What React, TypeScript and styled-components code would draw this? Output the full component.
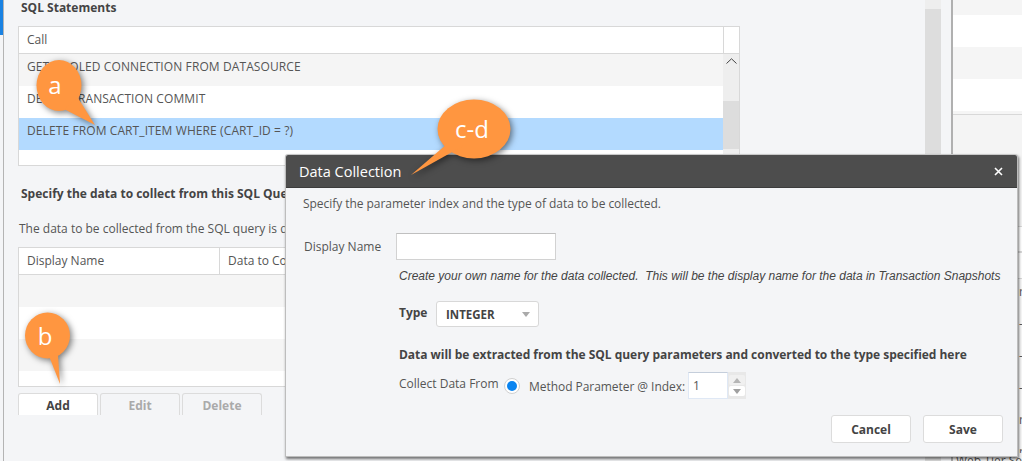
import React from "react";
import styled, { createGlobalStyle } from "styled-components";

const Global = createGlobalStyle`
  html, body { margin: 0; padding: 0; background: #f4f4f4; }
  * { box-sizing: border-box; }
`;

const FONT = `"Open Sans", "Noto Sans", sans-serif`;

const Page = styled.div`
  position: relative;
  width: 1022px;
  height: 461px;
  overflow: hidden;
  display: flex;
  font-family: ${FONT};
  font-size: 12px;
  color: #555;
  background: #f4f4f4;
`;

const Sliver = styled.div`
  width: 3px;
  flex: none;
  background: linear-gradient(#1a82e2 0 35px, #f4f5f7 35px);
`;

const Panel = styled.div`
  position: relative;
  width: 950px;
  flex: none;
  display: flex;
  background: #f4f5f7;
  border-left: 1px solid #b4b4b4;
  border-right: 2px solid #b0b0b0;
`;

const PanelBody = styled.div`
  width: 921px;
  flex: none;
  padding: 0 0 0 14px;
  display: flex;
  flex-direction: column;
`;

const OuterScroll = styled.div`
  width: 16px;
  flex: none;
  background: linear-gradient(#eeeeee 0 9px, #dddddd 9px);
`;

const SectionTitle = styled.div<{ $top?: number }>`
  font-weight: 700;
  font-size: 12px;
  line-height: 16px;
  color: #444;
  padding-left: 3px;
  margin-top: ${(p) => p.$top ?? 0}px;
`;

const Plain = styled.div`
  font-size: 12px;
  line-height: 16px;
  color: #555;
  padding-left: 1px;
  margin-top: 19px;
  white-space: nowrap;
`;

const Table = styled.div<{ $h: number; $top: number }>`
  width: 722px;
  height: ${(p) => p.$h}px;
  margin-top: ${(p) => p.$top}px;
  border: 1px solid #d8d8d8;
  background: #fff;
  flex: none;
  overflow: hidden;
`;

const HeadRow = styled.div`
  height: 27px;
  display: flex;
  border-bottom: 1px solid #d8d8d8;
  background: #fff;
`;

const HeadCell = styled.div<{ $w?: number; $grow?: boolean }>`
  width: ${(p) => (p.$w ? `${p.$w}px` : "auto")};
  flex: ${(p) => (p.$grow ? 1 : "none")};
  padding: 0 8px;
  line-height: 25px;
  border-right: 1px solid #d8d8d8;
  white-space: nowrap;
`;

const TableMain = styled.div`
  display: flex;
`;

const Rows = styled.div`
  width: 704px;
  flex: none;
`;

const Row = styled.div<{ $v: "odd" | "even" | "sel"; $h?: number }>`
  height: ${(p) => p.$h ?? 32}px;
  line-height: 25px;
  padding-left: 8px;
  color: #555;
  letter-spacing: 0.1px;
  white-space: nowrap;
  background: ${(p) =>
    p.$v === "odd" ? "#f5f5f5" : p.$v === "sel" ? "#b3daff" : "#fff"};
`;

const InnerScroll = styled.div`
  width: 16px;
  flex: none;
  position: relative;
  height: 112px;
  background: linear-gradient(#eeeeee 0 47px, #dddddd 47px 95px, #eeeeee 95px);
  display: flex;
  justify-content: center;
  padding-top: 4px;
`;

const ButtonRow = styled.div`
  display: flex;
  gap: 2px;
  margin-top: 6px;
`;

const TabButton = styled.div<{ $off?: boolean }>`
  width: 80px;
  height: 22px;
  border: 1px solid #dcdcdc;
  border-bottom: none;
  border-radius: 3px 3px 0 0;
  background: ${(p) => (p.$off ? "#f4f5f7" : "#fff")};
  color: ${(p) => (p.$off ? "#aaa" : "#444")};
  font-weight: 700;
  text-align: center;
  line-height: 23px;
`;

const RightSide = styled.div`
  flex: 1;
  min-width: 0;
  display: flex;
  flex-direction: column;
  background: #f4f4f4;
`;

const SideRow = styled.div<{ $v: "odd" | "even"; $h?: number }>`
  height: ${(p) => p.$h ?? 32}px;
  flex: none;
  background: ${(p) => (p.$v === "odd" ? "#f5f5f5" : "#fff")};
`;

const SideDivider = styled.div<{ $top?: number; $h?: number }>`
  height: ${(p) => p.$h ?? 1}px;
  flex: none;
  margin-top: ${(p) => p.$top ?? 0}px;
  background: #d8d8d8;
`;

const SideCell = styled.div<{ $h?: number }>`
  height: ${(p) => p.$h ?? 32}px;
  flex: none;
  padding-left: 66px;
  line-height: 26px;
  color: #555;
  font-size: 12px;
  background: #f8f8f8;
  white-space: nowrap;
  overflow: hidden;
`;

const BottomText = styled.div`
  height: 16px;
  flex: none;
  margin-left: -1px;
  padding-left: 3px;
  border-left: 1px solid #888;
  font-size: 12px;
  line-height: 16px;
  white-space: nowrap;
  overflow: hidden;
  color: #555;
`;

const Dialog = styled.div`
  position: absolute;
  left: 285px;
  top: 154px;
  width: 733px;
  height: 303px;
  background: #f4f5f7;
  border: 1px solid #bdbdbd;
  border-top-color: #c8c8c8;
  border-radius: 3px 3px 0 0;
  box-shadow: 1px 2px 3px rgba(0, 0, 0, 0.55);
  display: flex;
  flex-direction: column;
`;

const TitleBar = styled.div`
  height: 33px;
  flex: none;
  background: #4d4d4d;
  border-bottom: 1px solid #3c3c3c;
  border-radius: 2px 2px 0 0;
  color: #fff;
  font-size: 14.5px;
  display: flex;
  align-items: center;
  justify-content: space-between;
  padding: 0 13px;
`;

const CloseIcon = styled.svg`
  width: 9px;
  height: 9px;
  display: block;
  margin-right: 1px;
`;

const DialogBody = styled.div`
  flex: 1;
  display: flex;
  flex-direction: column;
  padding: 8px 14px 0 17px;
`;

const Intro = styled.div`
  line-height: 16px;
  color: #555;
  letter-spacing: -0.05px;
`;

const NameRow = styled.div`
  display: flex;
  align-items: center;
  margin-top: 21px;
  height: 27px;
`;

const FieldLabel = styled.div`
  width: 93px;
  flex: none;
  padding-left: 1px;
  color: #555;
`;

const TextBox = styled.div`
  width: 160px;
  height: 27px;
  background: #fff;
  border: 1px solid #d2d2d2;
  border-top-color: #c0c0c0;
`;

const Note = styled.div`
  margin: 8px 0 0 96px;
  font-family: "Liberation Sans", Arial, sans-serif;
  font-style: italic;
  font-size: 12px;
  line-height: 16px;
  color: #444;
  white-space: nowrap;
`;

const TypeRow = styled.div`
  display: flex;
  align-items: center;
  margin: 17px 0 0 96px;
  height: 26px;
`;

const TypeLabel = styled.div`
  font-weight: 700;
  color: #444;
  width: 37px;
  flex: none;
  margin-top: -3px;
`;

const SelectBox = styled.div`
  width: 103px;
  height: 26px;
  background: #fff;
  border: 1px solid #d8d8d8;
  border-radius: 3px;
  display: flex;
  align-items: center;
  justify-content: space-between;
  padding: 1px 8px 0 9px;
  font-weight: 700;
  font-size: 11.5px;
  color: #444;
`;

const Caret = styled.div`
  width: 0;
  height: 0;
  border-left: 4.5px solid transparent;
  border-right: 4.5px solid transparent;
  border-top: 5px solid #aaa;
`;

const BoldLine = styled.div`
  margin: 20px 0 0 96px;
  font-weight: 700;
  color: #444;
  line-height: 16px;
  letter-spacing: -0.03px;
  white-space: nowrap;
`;

const CollectRow = styled.div`
  display: flex;
  align-items: center;
  margin: 9px 0 0 96px;
  height: 27px;
  color: #555;
  white-space: nowrap;
`;

const CollectLabel = styled.div`
  width: 105px;
  flex: none;
  margin-top: -4px;
`;

const Radio = styled.div`
  width: 16px;
  height: 16px;
  flex: none;
  border-radius: 50%;
  background: #fff;
  border: 1px solid #d0d0d0;
  display: flex;
  align-items: center;
  justify-content: center;
  margin-right: 9px;
  &::after {
    content: "";
    width: 10px;
    height: 10px;
    border-radius: 50%;
    background: #0a84f0;
  }
`;

const MethodLabel = styled.div`
  width: 159px;
  flex: none;
  padding-top: 1px;
  letter-spacing: -0.05px;
`;

const NumberBox = styled.div`
  width: 40px;
  height: 27px;
  flex: none;
  background: #fff;
  border: 1px solid #dfe8f5;
  border-top-color: #c5cedb;
  padding-left: 4px;
  line-height: 26px;
  color: #555;
`;

const Spinner = styled.div`
  width: 18px;
  height: 27px;
  flex: none;
  background: #e8e8e8;
  padding: 3px 1px;
  display: flex;
  flex-direction: column;
  gap: 1px;
`;

const SpinBtn = styled.div<{ $up?: boolean }>`
  flex: 1;
  background: ${(p) => (p.$up ? "#f0f0f0" : "#fff")};
  border-radius: 2px;
  display: flex;
  align-items: center;
  justify-content: center;
  &::after {
    content: "";
    width: 0;
    height: 0;
    border-left: 4px solid transparent;
    border-right: 4px solid transparent;
    ${(p) =>
      p.$up
        ? "border-bottom: 5px solid #b5b5b5;"
        : "border-top: 5px solid #a0a0a0;"}
  }
`;

const Footer = styled.div`
  display: flex;
  justify-content: flex-end;
  gap: 12px;
  margin-top: 16px;
`;

const FootButton = styled.div`
  width: 80px;
  height: 28px;
  background: #fff;
  border: 1px solid #dcdcdc;
  border-radius: 3px;
  text-align: center;
  line-height: 27px;
  font-weight: 700;
  color: #444;
`;

const Callout = styled.div<{ $x: number; $y: number; $w: number; $h: number }>`
  position: absolute;
  left: ${(p) => p.$x}px;
  top: ${(p) => p.$y}px;
  width: ${(p) => p.$w}px;
  height: ${(p) => p.$h}px;
  pointer-events: none;
`;

const CalloutArt = styled.svg`
  position: absolute;
  inset: 0;
  width: 100%;
  height: 100%;
  overflow: visible;
  filter: drop-shadow(2px 2px 3px rgba(0, 0, 0, 0.5));
`;

const CalloutText = styled.span<{ $cx: number; $cy: number }>`
  position: absolute;
  left: ${(p) => p.$cx}px;
  top: ${(p) => p.$cy}px;
  transform: translate(-50%, -50%);
  color: #fff;
  font-size: 24px;
  line-height: 1;
  white-space: nowrap;
`;

const ORANGE = "#ff9640";

export default function App() {
  return (
    <>
      <Global />
      <Page>
        <Sliver />
        <Panel>
          <PanelBody>
            <SectionTitle>SQL Statements</SectionTitle>
            <Table $h={140} $top={10}>
              <HeadRow>
                <HeadCell $w={705}>Call</HeadCell>
              </HeadRow>
              <TableMain>
                <Rows>
                  <Row $v="odd">GET POOLED CONNECTION FROM DATASOURCE</Row>
                  <Row $v="even">DEBUG TRANSACTION COMMIT</Row>
                  <Row $v="sel">DELETE FROM CART_ITEM WHERE (CART_ID = ?)</Row>
                  <Row $v="even" $h={16} />
                </Rows>
                <InnerScroll>
                  <svg width="11" height="6" viewBox="0 0 11 6">
                    <path d="M0.5 5.5 L5.5 0.8 L10.5 5.5" fill="none" stroke="#444" strokeWidth="1" />
                  </svg>
                </InnerScroll>
              </TableMain>
            </Table>
            <SectionTitle $top={20}>
              Specify the data to collect from this SQL Query
            </SectionTitle>
            <Plain>The data to be collected from the SQL query is defined here</Plain>
            <Table $h={140} $top={10}>
              <HeadRow>
                <HeadCell $w={201}>Display Name</HeadCell>
                <HeadCell $grow>Data to Collect</HeadCell>
              </HeadRow>
              <Row $v="odd" />
              <Row $v="even" />
              <Row $v="odd" />
              <Row $v="even" $h={16} />
            </Table>
            <ButtonRow>
              <TabButton>Add</TabButton>
              <TabButton $off>Edit</TabButton>
              <TabButton $off>Delete</TabButton>
            </ButtonRow>
          </PanelBody>
          <OuterScroll />
        </Panel>
        <RightSide>
          <SideRow $v="odd" $h={15} />
          <SideRow $v="even" />
          <SideRow $v="odd" />
          <SideRow $v="even" />
          <SideRow $v="odd" $h={3} />
          <SideDivider />
          <SideDivider $top={111} />
          <SideRow $v="even" $h={24} />
          <SideDivider $h={2} />
          <SideRow $v="even" $h={25} />
          <SideDivider />
          <SideCell>r</SideCell>
          <SideCell>-</SideCell>
          <SideCell>-</SideCell>
          <SideCell>-</SideCell>
          <SideCell>r</SideCell>
          <SideCell $h={14}>r</SideCell>
          <BottomText>Web Tier Server</BottomText>
        </RightSide>

        <Dialog>
          <TitleBar>
            Data Collection
            <CloseIcon viewBox="0 0 9 9">
              <path d="M1 1 L8 8 M8 1 L1 8" stroke="#fff" strokeWidth="1.6" />
            </CloseIcon>
          </TitleBar>
          <DialogBody>
            <Intro>Specify the parameter index and the type of data to be collected.</Intro>
            <NameRow>
              <FieldLabel>Display Name</FieldLabel>
              <TextBox />
            </NameRow>
            <Note>
              Create your own name for the data collected.&nbsp; This will be the display name for the data in Transaction Snapshots
            </Note>
            <TypeRow>
              <TypeLabel>Type</TypeLabel>
              <SelectBox>
                INTEGER
                <Caret />
              </SelectBox>
            </TypeRow>
            <BoldLine>
              Data will be extracted from the SQL query parameters and converted to the type specified here
            </BoldLine>
            <CollectRow>
              <CollectLabel>Collect Data From</CollectLabel>
              <Radio />
              <MethodLabel>Method Parameter @ Index:</MethodLabel>
              <NumberBox>1</NumberBox>
              <Spinner>
                <SpinBtn $up />
                <SpinBtn />
              </Spinner>
            </CollectRow>
            <Footer>
              <FootButton>Cancel</FootButton>
              <FootButton>Save</FootButton>
            </Footer>
          </DialogBody>
        </Dialog>

        <Callout $x={36} $y={60} $w={60} $h={66}>
          <CalloutArt viewBox="0 0 60 66">
            <ellipse cx="23" cy="25.5" rx="22.5" ry="25.5" fill={ORANGE} />
            <path d="M28 49 L42 38 L59 65 Z" fill={ORANGE} />
          </CalloutArt>
          <CalloutText $cx={19} $cy={25}>a</CalloutText>
        </Callout>

        <Callout $x={25} $y={312} $w={46} $h={72}>
          <CalloutArt viewBox="0 0 46 72">
            <ellipse cx="22.5" cy="23.5" rx="22.5" ry="23" fill={ORANGE} />
            <path d="M24 44 L33 43 L35 72 Z" fill={ORANGE} />
          </CalloutArt>
          <CalloutText $cx={20} $cy={24}>b</CalloutText>
        </Callout>

        <Callout $x={411} $y={99} $w={102} $h={78}>
          <CalloutArt viewBox="0 0 102 78">
            <ellipse cx="63" cy="30" rx="36.5" ry="29.5" fill={ORANGE} />
            <path d="M44 38 L52 47 L0 76 Z" fill={ORANGE} />
          </CalloutArt>
          <CalloutText $cx={61} $cy={30}>c-d</CalloutText>
        </Callout>
      </Page>
    </>
  );
}
